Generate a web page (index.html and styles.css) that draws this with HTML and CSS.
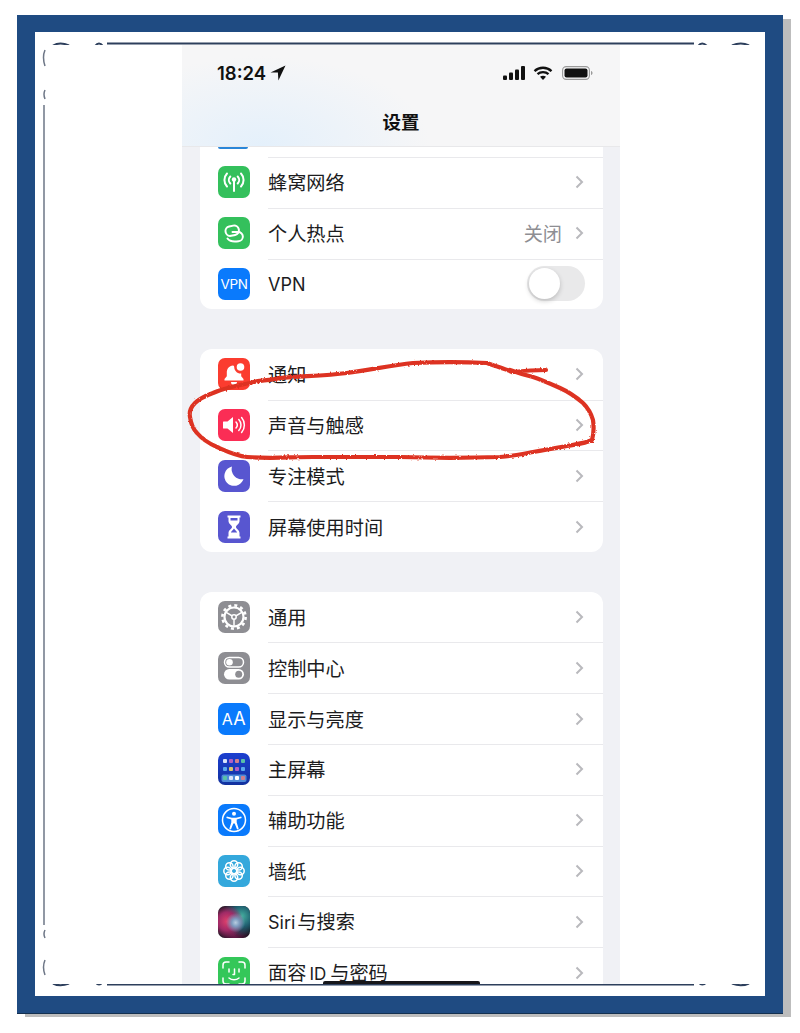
FILE: index.html
```html
<!DOCTYPE html>
<html lang="zh-CN">
<head>
<meta charset="utf-8">
<title>设置</title>
<link rel="stylesheet" href="styles.css">
</head>
<body>
<div class="frame">
  <!-- ornamental rule printed on the mat, mostly covered by the sheet -->
  <svg class="ornament" viewBox="35 32 730 964" aria-hidden="true">
    <g class="rule">
      <path d="M107 43.500H694M107 984.500H694"/>
      <path d="M53 45.500Q60 41.500 69 45.500M95 46Q99 41 103 46M698 46Q702 41 707 46M732 45.500Q741 41.500 749 45.500"/>
      <path d="M53 983.500Q60 987 69 983.500M95 982Q99 987 103 982M698 982Q702 987 707 982M732 983.500Q741 987 749 983.500"/>
    </g>
    <g class="rule-side">
      <path d="M44 105V925"/>
      <path d="M45 50Q42 57 45 66M45 90Q43 94 45 99M45 930Q43 934 45 938M45 960Q42 967 45 975"/>
    </g>
  </svg>

  <div class="sheet">
    <div class="phone">
      <header class="nav">
        <div class="status">
          <span class="time">18:24</span>
          <svg class="loc" viewBox="0 0 16 16"><path d="M15.500.5.500 7.600h7.400l.5 7.900z"/></svg>
          <span class="status-fill"></span>
          <svg class="signal" viewBox="0 0 22 14"><rect x="0" y="9.500" width="4" height="4.500" rx="1"/><rect x="6" y="6.500" width="4" height="7.500" rx="1"/><rect x="12" y="3.500" width="4" height="10.500" rx="1"/><rect x="18" y="0" width="4" height="14" rx="1"/></svg>
          <svg class="wifi" viewBox="0 0 20 14"><path class="wifi-arc" d="M1.500 5.200C6.300.6 13.700.6 18.500 5.200M4.500 8.200c3-2.800 8-2.800 11 0"/><path d="M10 14 7 10.800c1.700-1.500 4.300-1.500 6 0z"/></svg>
          <svg class="battery" viewBox="0 0 31 14"><rect class="batt-case" x=".6" y=".6" width="26.800" height="12.800" rx="3.600"/><rect x="2.500" y="2.500" width="23" height="9" rx="2"/><path class="batt-tip" d="M29 5v4c1-.3 1.500-1.100 1.500-2s-.5-1.700-1.500-2z"/></svg>
        </div>
        <h1 class="title">设置</h1>
      </header>

      <main class="list">
        <section class="card">
          <div class="row-cut"><span class="cut-icon"></span></div>
          <div class="row">
            <span class="icon green"><svg viewBox="0 0 32 32"><g class="line"><path d="M16 14v11"/><path d="M12.300 10.500a5 5 0 0 0 0 7M19.700 10.500a5 5 0 0 1 0 7M9 7.500a9.500 9.500 0 0 0 0 13M23 7.500a9.500 9.500 0 0 1 0 13"/></g><circle class="solid" cx="16" cy="13.500" r="2.200"/></svg></span>
            <div class="body"><span class="label">蜂窝网络</span><svg class="chev" viewBox="0 0 9 14"><path d="M1.500 1.500 7 7l-5.500 5.500"/></svg></div>
          </div>
          <div class="row">
            <span class="icon green"><svg viewBox="0 0 32 32"><g class="line"><rect x="7.500" y="9" width="13.500" height="9.500" rx="4.700" transform="rotate(-12 14 14)"/><path d="M14.500 15h5.500a4.600 4.600 0 0 1 .5 9.200c-3 .3-6.500.2-8-.4-1.300-.5-2.300-1.300-3-2.300"/></g></svg></span>
            <div class="body"><span class="label">个人热点</span><span class="value">关闭</span><svg class="chev" viewBox="0 0 9 14"><path d="M1.500 1.500 7 7l-5.500 5.500"/></svg></div>
          </div>
          <div class="row">
            <span class="icon blue"><span class="icon-text">VPN</span></span>
            <div class="body"><span class="label latin-row">VPN</span><span class="toggle"><span class="knob"></span></span></div>
          </div>
        </section>

        <section class="card">
          <div class="row">
            <span class="icon red"><svg viewBox="0 0 32 32"><path class="solid" d="M15 7.500c-4 .4-6.200 3.400-6.200 7v3.700L6.500 21v1.500h19V21l-2.300-2.800v-2.700c-3.800.4-7-2.800-7-6.500 0-.5-.5-1.600-1.200-1.500z"/><path class="solid" d="M13 24h6a3 3 0 0 1-6 0z"/><circle class="solid" cx="22.500" cy="9" r="3.800"/></svg></span>
            <div class="body"><span class="label">通知</span><svg class="chev" viewBox="0 0 9 14"><path d="M1.500 1.500 7 7l-5.500 5.500"/></svg></div>
          </div>
          <div class="row">
            <span class="icon pink"><svg viewBox="0 0 32 32"><path class="solid" d="M5.500 12.500h4L15 8v16l-5.500-4.500h-4a.5.500 0 0 1-.5-.5v-6a.5.500 0 0 1 .5-.5z"/><g class="line thin"><path d="M18 13a4.500 4.500 0 0 1 0 6M20.800 10.500a8 8 0 0 1 0 11M23.600 8.500a11.500 11.500 0 0 1 0 15"/></g></svg></span>
            <div class="body"><span class="label">声音与触感</span><svg class="chev" viewBox="0 0 9 14"><path d="M1.500 1.500 7 7l-5.500 5.500"/></svg></div>
          </div>
          <div class="row">
            <span class="icon indigo"><svg viewBox="0 0 32 32"><path class="solid" d="M14 6.500A9.800 9.800 0 1 0 25.500 19 10 10 0 0 1 14 6.500z"/></svg></span>
            <div class="body"><span class="label">专注模式</span><svg class="chev" viewBox="0 0 9 14"><path d="M1.500 1.500 7 7l-5.500 5.500"/></svg></div>
          </div>
          <div class="row">
            <span class="icon indigo"><svg viewBox="0 0 32 32"><path class="solid" d="M9.500 4.500h13v2h-1v3.500c0 2.800-3.500 4.300-3.500 6s3.500 3.200 3.500 6v3.500h1v2h-13v-2h1V22c0-2.800 3.500-4.300 3.500-6s-3.500-3.200-3.500-6V6.500h-1z"/><path class="cutout" d="M12.500 7h7v2.500h-7zM16 17.500c.8 1.200 2.600 2.500 3.200 4h-6.400c.6-1.500 2.400-2.800 3.200-4z"/></svg></span>
            <div class="body"><span class="label">屏幕使用时间</span><svg class="chev" viewBox="0 0 9 14"><path d="M1.500 1.500 7 7l-5.500 5.500"/></svg></div>
          </div>
        </section>

        <section class="card">
          <div class="row">
            <span class="icon gray"><svg viewBox="0 0 32 32"><circle class="gear-teeth" cx="16" cy="16" r="11.600"/><circle class="gear-ring" cx="16" cy="16" r="9.500"/><g class="line thin"><path d="M16 16 8.600 11.700M16 16l7.400-4.300M16 16v8.500"/></g><circle class="hub" cx="16" cy="16" r="2.200"/></svg></span>
            <div class="body"><span class="label">通用</span><svg class="chev" viewBox="0 0 9 14"><path d="M1.500 1.500 7 7l-5.500 5.500"/></svg></div>
          </div>
          <div class="row">
            <span class="icon gray"><svg viewBox="0 0 32 32"><rect class="line thin" x="6.500" y="5.500" width="19" height="9.500" rx="4.750"/><circle class="solid" cx="11.500" cy="10.250" r="3.300"/><rect class="solid" x="6" y="17" width="20" height="10.500" rx="5.250"/><circle class="gray-dot" cx="20.700" cy="22.250" r="3.500"/></svg></span>
            <div class="body"><span class="label">控制中心</span><svg class="chev" viewBox="0 0 9 14"><path d="M1.500 1.500 7 7l-5.500 5.500"/></svg></div>
          </div>
          <div class="row">
            <span class="icon blue"><span class="icon-text aa"><small>A</small>A</span></span>
            <div class="body"><span class="label">显示与亮度</span><svg class="chev" viewBox="0 0 9 14"><path d="M1.500 1.500 7 7l-5.500 5.500"/></svg></div>
          </div>
          <div class="row">
            <span class="icon home"><svg viewBox="0 0 32 32"><rect class="dock" x="3.500" y="21.500" width="25" height="7.500" rx="2"/><g class="apps"><rect class="a1" x="5" y="6" width="4" height="4" rx="1"/><rect class="a2" x="11" y="6" width="4" height="4" rx="1"/><rect class="a3" x="17" y="6" width="4" height="4" rx="1"/><rect class="a4" x="23" y="6" width="4" height="4" rx="1"/><rect class="a5" x="5" y="14" width="4" height="4" rx="1"/><rect class="a6" x="11" y="14" width="4" height="4" rx="1"/><rect class="a2" x="17" y="14" width="4" height="4" rx="1"/><rect class="a5" x="23" y="14" width="4" height="4" rx="1"/><rect class="a4" x="5" y="23" width="4" height="4" rx="1"/><rect class="a1" x="11" y="23" width="4" height="4" rx="1"/><rect class="a7" x="17" y="23" width="4" height="4" rx="1"/><rect class="a3" x="23" y="23" width="4" height="4" rx="1"/></g></svg></span>
            <div class="body"><span class="label">主屏幕</span><svg class="chev" viewBox="0 0 9 14"><path d="M1.500 1.500 7 7l-5.500 5.500"/></svg></div>
          </div>
          <div class="row">
            <span class="icon blue"><svg viewBox="0 0 32 32"><circle class="line thin" cx="16" cy="16" r="11.500"/><circle class="solid" cx="16" cy="9.800" r="2"/><path class="solid" d="M8.800 12.500l5 1.300h4.400l5-1.300.5 1.400-5 1.700v3l2 6.200-1.600.6-2.400-6h-1.400l-2.400 6-1.600-.6 2-6.200v-3l-5-1.700z"/></svg></span>
            <div class="body"><span class="label">辅助功能</span><svg class="chev" viewBox="0 0 9 14"><path d="M1.500 1.500 7 7l-5.500 5.500"/></svg></div>
          </div>
          <div class="row">
            <span class="icon sky"><svg viewBox="0 0 32 32"><g class="line thin"><circle cx="16" cy="16" r="2.800"/><circle cx="16" cy="9.500" r="3.700"/><circle cx="16" cy="22.500" r="3.700"/><circle cx="9.500" cy="16" r="3.700"/><circle cx="22.500" cy="16" r="3.700"/><circle cx="11.400" cy="11.400" r="3.700"/><circle cx="20.600" cy="11.400" r="3.700"/><circle cx="11.400" cy="20.600" r="3.700"/><circle cx="20.600" cy="20.600" r="3.700"/></g></svg></span>
            <div class="body"><span class="label">墙纸</span><svg class="chev" viewBox="0 0 9 14"><path d="M1.500 1.500 7 7l-5.500 5.500"/></svg></div>
          </div>
          <div class="row">
            <span class="icon siri"><span class="siri-orb"></span></span>
            <div class="body"><span class="label"><span class="latin siri-name">Siri</span>与搜索</span><svg class="chev" viewBox="0 0 9 14"><path d="M1.500 1.500 7 7l-5.500 5.500"/></svg></div>
          </div>
          <div class="row">
            <span class="icon lime"><svg viewBox="0 0 32 32"><g class="line thin"><path d="M5 11V8a3 3 0 0 1 3-3h3M21 5h3a3 3 0 0 1 3 3v3M27 21v3a3 3 0 0 1-3 3h-3M11 27H8a3 3 0 0 1-3-3v-3"/><path d="M11 12v3M21 12v3M16.500 12v5.500h-1.500M11 21c2.800 2.400 7.200 2.400 10 0"/></g></svg></span>
            <div class="body"><span class="label">面容<span class="latin id-name">ID</span>与密码</span><svg class="chev" viewBox="0 0 9 14"><path d="M1.500 1.500 7 7l-5.500 5.500"/></svg></div>
          </div>
        </section>
      </main>
      <span class="home-bar"></span>
    </div>
  </div>

  <!-- hand-drawn marker loop around the sound row -->
  <svg class="marker" viewBox="35 32 730 964" aria-hidden="true">
    <defs>
      <filter id="rough" x="-5%" y="-10%" width="110%" height="120%">
        <feTurbulence type="fractalNoise" baseFrequency=".5" numOctaves="2" seed="4"/>
        <feDisplacementMap in="SourceGraphic" scale="2.600"/>
      </filter>
    </defs>
    <path class="loop" filter="url(#rough)" d="M546 370C535 370 522 371 512 372M512 372C505 369 495 366 487 363C465 362 435 362 413 363C392 365 370 370 347 373C325 376 300 376 280 378C268 381 258 380 250 383C235 386 224 388 213 393C205 396 199 399 195 403C190 408 189 412 190 417C191 424 193 429 197 433C203 440 210 444 217 447C226 451 236 456 247 457C270 459 290 457 313 457C340 457 370 457 400 457C430 458 470 458 500 457C512 456 522 454 533 452C545 450 556 448 567 446C578 444 586 443 592 440C594 433 594 427 593 420C591 413 588 408 583 403C576 397 569 392 560 388C551 384 542 380 533 377C525 375 518 373 510 370"/>
  </svg>
</div>
</body>
</html>
```

FILE: styles.css
```css
* { box-sizing: border-box; }

html, body { margin: 0; background: #fff; }

body {
  width: 800px;
  height: 1033px;
  overflow: hidden;
  padding: 15px 0 0 17px;
  font-family: "Noto Sans CJK SC", "Inter", sans-serif;
  color: #1c1c1e;
}

/* Framed mat */
.frame {
  position: relative;
  width: 766px;
  height: 998px;
  border: solid #1f4b82;
  border-width: 17px 18px;
  background: #fff;
  padding: 13px 10px 12px 11px;
  box-shadow: 0 1px 0 #14304f, 8px 4px 0 #bdbdbd;
}

.ornament, .marker {
  position: absolute;
  left: 0;
  top: 0;
  width: 730px;
  height: 964px;
  pointer-events: none;
}

.rule path {
  fill: none;
  stroke: #2d3f5c;
  stroke-width: 2;
}

.rule-side path {
  fill: none;
  stroke: #6d7686;
  stroke-width: 1.500;
}

.marker { z-index: 3; }

.loop {
  fill: none;
  stroke: #dd3320;
  stroke-width: 4.200;
  stroke-linecap: round;
  stroke-linejoin: round;
}

.sheet {
  position: relative;
  height: 100%;
  padding-left: 136px;
  background: #fff;
  border-radius: 6px;
}

/* Phone screen */
.phone {
  position: relative;
  width: 438px;
  height: 100%;
  overflow: hidden;
  background: #f0f1f5;
  display: flex;
  flex-direction: column;
}

.nav {
  height: 102px;
  flex: none;
  background:
    radial-gradient(ellipse 170px 90px at 18% 100%, #e4f0fb 0, rgba(228, 240, 251, 0) 100%),
    #f6f6f7;
  border-bottom: 1px solid #e8e8ea;
}

.status {
  height: 56px;
  padding: 0 27px 0 35px;
  display: flex;
  align-items: center;
}

.time {
  font-family: "Inter", sans-serif;
  font-size: 18.500px;
  font-weight: 600;
  color: #111;
}

.loc { width: 16px; height: 16px; margin-left: 4px; fill: #111; }
.status-fill { flex: 1; }
.signal { width: 22px; height: 14px; fill: #111; }
.wifi { width: 20px; height: 14px; margin-left: 8px; fill: #111; }
.wifi-arc { fill: none; stroke: #111; stroke-width: 2.300; }
.battery { width: 31px; height: 14px; margin-left: 9px; fill: #111; }
.batt-case { fill: none; stroke: #9a9a9a; stroke-width: 1.100; }
.batt-tip { fill: #9a9a9a; }

.title {
  margin: 0;
  height: 40px;
  line-height: 40px;
  text-align: center;
  font-size: 18.500px;
  font-weight: 700;
  color: #111;
}

.list {
  flex: 1;
  min-height: 0;
  padding: 0 17px 0 18px;
  display: flex;
  flex-direction: column;
  gap: 39.500px;
}

.card {
  flex: none;
  background: #fff;
  border-radius: 0 0 12px 12px;
}

.card + .card { border-radius: 12px; }

.row-cut {
  height: 10px;
  padding-left: 18px;
}

.cut-icon {
  display: block;
  width: 30px;
  height: 2px;
  background: #2a86d8;
  border-radius: 0 0 8px 8px;
}

.row {
  height: 50.800px;
  padding-left: 18px;
  display: flex;
  align-items: center;
  gap: 18px;
}

.body {
  flex: 1;
  height: 100%;
  padding: 0 19px 1px 0;
  display: flex;
  align-items: center;
  border-top: 1px solid #e9e9ec;
}

.card + .card .row:first-child .body { border-top-color: transparent; }

.label {
  flex: 1;
  font-size: 19.200px;
  line-height: 26px;
  color: #1c1c1e;
}

.latin { font-family: "Inter", sans-serif; }
.siri-name { margin-right: 2px; font-size: 18px; }
.id-name { margin: 0 4px 0 3px; font-size: 17px; }

.latin-row {
  font-family: "Inter", sans-serif;
  font-size: 18px;
  padding-top: 2px;
}

.value {
  font-size: 19.200px;
  color: #8e8e93;
  margin-right: 13px;
}

.chev {
  width: 9px;
  height: 14px;
  fill: none;
  stroke: #b9b9bd;
  stroke-width: 2;
}

.toggle {
  display: block;
  width: 58px;
  height: 35px;
  margin-right: -1px;
  padding: 2px;
  border-radius: 18px;
  background: #e9e9ea;
}

.knob {
  display: block;
  width: 31px;
  height: 31px;
  border-radius: 50%;
  background: #fff;
  box-shadow: 0 2px 5px rgba(0, 0, 0, .2);
}

/* Settings icons */
.icon {
  flex: none;
  width: 32px;
  height: 32px;
  border-radius: 7px;
  display: flex;
  align-items: center;
  justify-content: center;
  overflow: hidden;
}

.icon svg { display: block; width: 32px; height: 32px; }

.green { background: #34c05c; }
.blue { background: #0a7afc; }
.red { background: #fb3c2f; }
.pink { background: #fb2d55; }
.indigo { background: #5856d0; }
.gray { background: #8e8e93; }
.sky { background: #34a8dc; }
.lime { background: #34c759; }
.home { background: linear-gradient(#1c3fd0, #12319e); }
.siri { background: #10141a; }

.solid { fill: #fff; }
.cutout { fill: #5856d0; }
.gray-dot { fill: #8e8e93; }

.line {
  fill: none;
  stroke: #fff;
  stroke-width: 2;
  stroke-linecap: round;
  stroke-linejoin: round;
}

.line.thin { stroke-width: 1.500; }

.gear-teeth {
  fill: none;
  stroke: #fff;
  stroke-width: 2.600;
  stroke-dasharray: 3 3.070;
}

.gear-ring {
  fill: none;
  stroke: #fff;
  stroke-width: 2.200;
}

.hub { fill: #8e8e93; stroke: #fff; stroke-width: 1.500; }

.icon-text {
  font-family: "Inter", sans-serif;
  font-size: 13.500px;
  font-weight: 400;
  color: #fff;
  letter-spacing: -.3px;
}

.icon-text.aa { font-size: 18px; letter-spacing: .5px; }
.icon-text small { font-size: 16px; }

.dock { fill: #4f8ad8; }
.a1 { fill: #d8e2fa; }
.a2 { fill: #b05fc4; }
.a3 { fill: #d07f8c; }
.a4 { fill: #58c0a8; }
.a5 { fill: #5aa8ee; }
.a6 { fill: #d8c46a; }
.a7 { fill: #ffffff; }

.siri-orb {
  display: block;
  width: 32px;
  height: 32px;
  background:
    radial-gradient(circle at 55% 52%, #b8cce0 0, #7d9cc0 16%, rgba(125, 156, 192, 0) 40%),
    radial-gradient(circle at 28% 48%, #e0406c 0, #a02a66 32%, rgba(160, 42, 102, 0) 58%),
    radial-gradient(circle at 74% 32%, #46b0a0 0, #1f5f70 32%, rgba(31, 95, 112, 0) 62%),
    radial-gradient(circle at 50% 92%, #6a1a4a 0, rgba(106, 26, 74, 0) 50%),
    #14141c;
}

.home-bar {
  position: absolute;
  left: 141px;
  bottom: 0;
  width: 157px;
  height: 3px;
  border-radius: 2px 2px 0 0;
  background: #16161a;
}
```
